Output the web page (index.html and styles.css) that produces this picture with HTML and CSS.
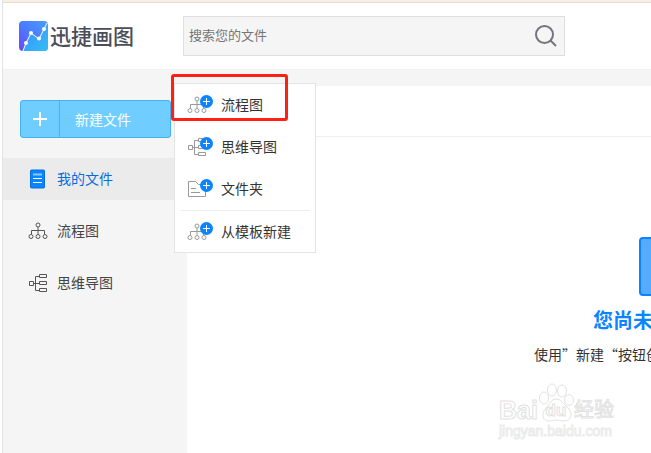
FILE: index.html
```html
<!DOCTYPE html>
<html lang="zh-CN">
<head>
  <meta charset="UTF-8">
  <meta name="viewport" content="width=device-width, initial-scale=1.0">
  <title>迅捷画图</title>
  <link rel="stylesheet" href="styles.css">
</head>
<body>
  <!-- shared icons -->
  <svg class="sprite" aria-hidden="true">
    <symbol id="icon-flow" viewBox="0 0 20 18">
      <circle cx="10" cy="3" r="2"/>
      <path d="M10 5v7M3.500 12V8.500h13V12"/>
      <circle cx="3" cy="14.500" r="2"/>
      <circle cx="10" cy="14.500" r="2"/>
      <circle cx="17" cy="14.500" r="2"/>
    </symbol>
    <symbol id="icon-mind" viewBox="0 0 20 20">
      <path d="M1.500 8.500h4v4h-4zM11.500 1.500h7v3h-7zM11.500 8.500h7v3h-7zM11.500 15.500h7v3h-7zM5.500 10.500h6M11.500 3.500h-4v14h4"/>
    </symbol>
    <symbol id="icon-folder" viewBox="0 0 20 18">
      <path d="M1.500 1.500h7l3 3h7v12h-17zM4 8.500h5M4 12.500h9"/>
    </symbol>
    <symbol id="icon-plus" viewBox="0 0 13 13">
      <circle cx="6.500" cy="6.500" r="6.500" fill="#0a84ff"/>
      <path d="M6.500 3v7M3 6.500h7" stroke="#fff"/>
    </symbol>
  </svg>

  <div class="page">
    <div class="notice-bar"></div>

    <header class="header">
      <div class="logo">
        <svg class="logo-icon" viewBox="0 0 30 30" aria-hidden="true">
          <defs>
            <linearGradient id="logo-bg" x1="0" y1="1" x2="1" y2="0">
              <stop offset="0" stop-color="#6a45fa"/>
              <stop offset=".5" stop-color="#4a7dff"/>
              <stop offset="1" stop-color="#4a9cff"/>
            </linearGradient>
            <linearGradient id="logo-area" x1="0" y1="0" x2="1" y2="1">
              <stop offset="0" stop-color="#3a8cff"/>
              <stop offset="1" stop-color="#35bdf5"/>
            </linearGradient>
          </defs>
          <rect width="29" height="30" rx="4" fill="url(#logo-bg)"/>
          <path d="M3 30l4-8 5-10 8 6 5-10 4-5v23a4 4 0 0 1-4 4z" fill="url(#logo-area)"/>
          <path d="M4 30l3-8 5-10 8 6 5-10 3-6" fill="none" stroke="#fff"/>
          <g fill="#fff">
            <circle cx="7" cy="22" r="2"/>
            <circle cx="12" cy="12" r="2"/>
            <circle cx="20" cy="17.500" r="2"/>
            <circle cx="25" cy="8" r="2"/>
          </g>
        </svg>
        <span class="logo-text">迅捷画图</span>
      </div>
      <form class="search">
        <input class="search-input" type="text" placeholder="搜索您的文件" aria-label="搜索您的文件">
        <button class="search-btn" type="button" aria-label="搜索">
          <svg viewBox="0 0 22 22" aria-hidden="true"><circle cx="9.500" cy="9.500" r="8.500"/><path d="M15.500 15.500l5.500 5.500"/></svg>
        </button>
      </form>
    </header>

    <div class="body">
      <aside class="sidebar">
        <div class="create">
          <button class="create-btn" type="button">
            <span class="create-plus">
              <svg viewBox="0 0 16 16" aria-hidden="true"><path d="M8 1v14M1 8h14"/></svg>
            </span>
            <span class="create-label">新建文件</span>
          </button>

          <div class="menu">
            <button class="menu-item" type="button">
              <span class="menu-icon"><svg class="icon icon-light"><use href="#icon-flow"/></svg><svg class="plus"><use href="#icon-plus"/></svg></span>
              <span class="label">流程图</span>
            </button>
            <button class="menu-item" type="button">
              <span class="menu-icon"><svg class="icon icon-light"><use href="#icon-mind"/></svg><svg class="plus"><use href="#icon-plus"/></svg></span>
              <span class="label">思维导图</span>
            </button>
            <button class="menu-item" type="button">
              <span class="menu-icon"><svg class="icon icon-light"><use href="#icon-folder"/></svg><svg class="plus"><use href="#icon-plus"/></svg></span>
              <span class="label">文件夹</span>
            </button>
            <button class="menu-item menu-item-last" type="button">
              <span class="menu-icon"><svg class="icon icon-light"><use href="#icon-flow"/></svg><svg class="plus"><use href="#icon-plus"/></svg></span>
              <span class="label">从模板新建</span>
            </button>
          </div>
          <div class="highlight"></div>
        </div>

        <nav class="nav">
          <a class="nav-item active" href="#">
            <svg class="icon" viewBox="0 0 20 20" aria-hidden="true">
              <rect x="2.500" y="1" width="14" height="18" rx="1" fill="#0a84ff" stroke="#0670d8"/>
              <path d="M5 5.500h9" stroke="#8fc8ff" stroke-width="2"/>
              <path d="M5 9.500h9M5 13.500h9" stroke="#fff"/>
            </svg>
            <span class="label">我的文件</span>
          </a>
          <a class="nav-item" href="#"><svg class="icon"><use href="#icon-flow"/></svg><span class="label">流程图</span></a>
          <a class="nav-item" href="#"><svg class="icon"><use href="#icon-mind"/></svg><span class="label">思维导图</span></a>
        </nav>
      </aside>

      <main class="main">
        <div class="toolbar"></div>
        <div class="empty">
          <div class="empty-icon"></div>
          <h2 class="empty-title">您尚未</h2>
          <p class="empty-hint">使用”新建“按钮创</p>
        </div>
      </main>
    </div>
  </div>

  <div class="watermark">
    <div class="watermark-brand">
      <span class="watermark-latin">Bai</span>
      <span class="paw">
        <svg viewBox="0 0 36 40" aria-hidden="true">
          <ellipse cx="6" cy="15" rx="4.500" ry="6"/>
          <ellipse cx="14" cy="7" rx="4.500" ry="6"/>
          <ellipse cx="24" cy="8" rx="4.500" ry="6"/>
          <ellipse cx="31" cy="17" rx="4.500" ry="5.500"/>
          <path d="M18 16c-5 0-6 5-10 9s-5 13 3 13c3 0 4-1 7-1s4 1 8 1c8 0 9-8 4-13s-7-9-12-9z"/>
        </svg>
        <span class="paw-text">du</span>
      </span>
      <span class="watermark-cn">经验</span>
    </div>
    <div class="watermark-url">jingyan.baidu.com</div>
  </div>
</body>
</html>
```
FILE: styles.css
```css
* {
  box-sizing: border-box;
}

body {
  margin: 0;
  min-height: 100vh;
  overflow: hidden;
  background-color: #fff;
  color: #333;
  font-family: "Noto Sans CJK SC", sans-serif;
  font-size: 14px;
  line-height: 20px;
}

button,
input {
  margin: 0;
  padding: 0;
  border: 0;
  background: none;
  color: inherit;
  font: inherit;
}

.sprite {
  position: absolute;
  width: 0;
  height: 0;
}

.page {
  display: flex;
  flex-direction: column;
  min-height: 100vh;
  margin-left: 2px;
  border-left: 1px solid #e3e3e3;
}

.notice-bar {
  height: 3px;
  background-color: #f8f0e4;
  border-bottom: 1px solid #e5ddd0;
}

/* header */
.header {
  display: flex;
  align-items: center;
  padding: 13px 16px;
}

.logo {
  display: flex;
  align-items: center;
  gap: 1px;
  width: 164px;
}

.logo-icon {
  width: 30px;
  height: 30px;
}

.logo-text {
  padding-bottom: 3px;
  color: #4b4d59;
  font-size: 21px;
  font-weight: 500;
  line-height: 30px;
}

.search {
  display: flex;
  flex: 1;
  max-width: 382px;
  height: 40px;
  background-color: #f5f5f5;
  border: 1px solid #dfdfdf;
}

.search-input {
  flex: 1;
  min-width: 0;
  padding: 0 0 2px 5px;
  font-size: 13px;
  outline: none;
}

.search-input::placeholder {
  color: #757575;
}

.search-btn {
  display: flex;
  align-items: center;
  padding: 0 7px;
}

.search-btn svg {
  width: 22px;
  height: 22px;
  fill: none;
  stroke: #74747c;
  stroke-width: 2;
}

/* body */
.body {
  display: flex;
  flex: 1;
  padding-top: 16px;
  background-color: #f5f5f5;
  border-top: 1px solid #f0f0f0;
}

.sidebar {
  flex: none;
  width: 184px;
}

.create {
  position: relative;
  padding: 14px 16px 20px 17px;
}

.create-btn {
  display: flex;
  width: 100%;
  height: 38px;
  background-color: #70cdff;
  border: 1px solid #43b3f0;
  border-radius: 3px;
  color: #fff;
}

.create-plus {
  display: flex;
  align-items: center;
  justify-content: center;
  width: 39px;
  height: 100%;
  border-right: 1px solid #43b3f0;
}

.create-plus svg {
  width: 16px;
  height: 16px;
  stroke: #fff;
  stroke-width: 2;
}

.create-label {
  padding-left: 15px;
  line-height: 36px;
}

.label {
  padding-bottom: 2px;
}

.menu {
  position: absolute;
  top: -3px;
  left: 171px;
  z-index: 1;
  width: 142px;
  padding: 0 5px;
  background-color: #fff;
  border: 1px solid #e3e3e3;
}

.menu-item {
  display: flex;
  align-items: center;
  gap: 8px;
  width: 100%;
  height: 42px;
  padding-left: 7px;
  white-space: nowrap;
}

.menu-item-last {
  border-top: 1px solid #eee;
}

.menu-icon {
  position: relative;
  display: flex;
  width: 26px;
  height: 20px;
}

.plus {
  position: absolute;
  top: 0;
  right: 0;
  width: 13px;
  height: 13px;
}

.highlight {
  position: absolute;
  top: -12px;
  left: 168px;
  z-index: 2;
  width: 117px;
  height: 47px;
  border: 3px solid #ff2015;
  border-radius: 3px;
  pointer-events: none;
}

.icon {
  width: 20px;
  height: 20px;
  fill: none;
  stroke: #555;
}

.icon-light {
  stroke: #999;
}

.nav {
  display: flex;
  flex-direction: column;
  gap: 10px;
}

.nav-item {
  display: flex;
  align-items: center;
  gap: 9px;
  height: 42px;
  padding-left: 25px;
  color: #444;
  text-decoration: none;
}

.nav-item.active {
  background-color: #ebebeb;
  color: #0a6bdc;
}

.main {
  flex: 1;
  min-width: 0;
  overflow: hidden;
  background-color: #fff;
}

.toolbar {
  height: 51px;
  border-bottom: 1px solid #eee;
}

.empty {
  width: 298px;
  margin-left: 347px;
  padding-top: 100px;
  white-space: nowrap;
}

.empty-icon {
  width: 88px;
  height: 59px;
  margin: 0 auto;
  background-color: #54abff;
  border: 2px solid #0a84ff;
  border-radius: 4px;
}

.empty-title {
  width: 180px;
  margin: 9px auto;
  color: #0a84ff;
  font-size: 20px;
  line-height: 30px;
}

.empty-hint {
  margin: 0;
}

/* watermark over the page corner */
.watermark {
  position: absolute;
  right: 35px;
  bottom: 14px;
  z-index: 3;
  width: 117px;
  color: #fff;
  font-family: "Liberation Sans", "Noto Sans CJK SC", sans-serif;
  -webkit-text-stroke: 1px #e2e2e2;
  pointer-events: none;
}

.watermark-brand {
  display: flex;
  align-items: flex-end;
}

.watermark-latin {
  font-size: 25px;
  font-weight: bold;
  line-height: 26px;
}

.paw {
  position: relative;
  width: 36px;
  height: 40px;
}

.paw svg {
  width: 36px;
  height: 40px;
  fill: #fff;
  stroke: #e2e2e2;
}

.paw-text {
  position: absolute;
  right: 0;
  bottom: 2px;
  left: 0;
  font-size: 17px;
  font-weight: bold;
  text-align: center;
}

.watermark-cn {
  font-size: 20px;
  line-height: 26px;
}

.watermark-url {
  font-size: 14px;
  line-height: 16px;
  -webkit-text-stroke: 1px #ebebeb;
}
```
